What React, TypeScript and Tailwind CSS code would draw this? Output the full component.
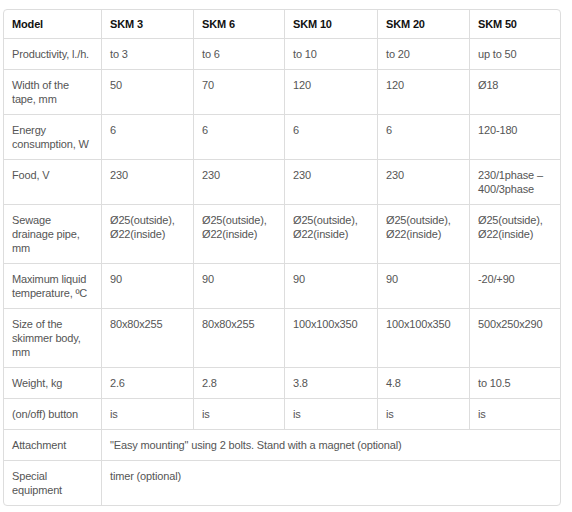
const models = ["SKM 3", "SKM 6", "SKM 10", "SKM 20", "SKM 50"];

const rows: { label: string; values: string[] }[] = [
  { label: "Productivity, l./h.", values: ["to 3", "to 6", "to 10", "to 20", "up to 50"] },
  { label: "Width of the tape, mm", values: ["50", "70", "120", "120", "Ø18"] },
  { label: "Energy consumption, W", values: ["6", "6", "6", "6", "120-180"] },
  { label: "Food, V", values: ["230", "230", "230", "230", "230/1phase – 400/3phase"] },
  {
    label: "Sewage drainage pipe, mm",
    values: Array(5).fill("Ø25(outside), Ø22(inside)"),
  },
  { label: "Maximum liquid temperature, ºC", values: ["90", "90", "90", "90", "-20/+90"] },
  {
    label: "Size of the skimmer body, mm",
    values: ["80x80x255", "80x80x255", "100x100x350", "100x100x350", "500x250x290"],
  },
  { label: "Weight, kg", values: ["2.6", "2.8", "3.8", "4.8", "to 10.5"] },
  { label: "(on/off) button", values: ["is", "is", "is", "is", "is"] },
];

const spanRows = [
  { label: "Attachment", value: "\"Easy mounting\" using 2 bolts. Stand with a magnet (optional)" },
  { label: "Special equipment", value: "timer (optional)" },
];

const cell = "px-[8px] py-[8px] align-top border-t border-[#dddddd]";

export default function App() {
  return (
    <div className="min-h-[512px] bg-white pl-[3px] pt-[9px] font-['Liberation_Sans',Arial,sans-serif] text-[11px] leading-[14px] tracking-[-0.15px]">
      <div className="w-[558px] overflow-hidden rounded-[4px] border border-[#dddddd]">
        <table className="w-[556px] table-fixed border-separate border-spacing-0">
          <colgroup>
            <col className="w-[97px]" />
            <col className="w-[92px]" />
            <col className="w-[91px]" />
            <col className="w-[93px]" />
            <col className="w-[92px]" />
            <col className="w-[91px]" />
          </colgroup>
          <thead>
            <tr>
              <th className="px-[8px] py-[7px] text-left align-top font-bold text-[#111111]">Model</th>
              {models.map((m) => (
                <th
                  key={m}
                  className="border-l border-[#dddddd] px-[8px] py-[7px] text-left align-top font-bold text-[#111111]"
                >
                  {m}
                </th>
              ))}
            </tr>
          </thead>
          <tbody className="text-[#555555]">
            {rows.map((r) => (
              <tr key={r.label}>
                <td className={cell}>{r.label}</td>
                {r.values.map((v, i) => (
                  <td key={i} className={`${cell} border-l`}>
                    {v}
                  </td>
                ))}
              </tr>
            ))}
            {spanRows.map((r) => (
              <tr key={r.label}>
                <td className={cell}>{r.label}</td>
                <td colSpan={5} className={`${cell} border-l`}>
                  {r.value}
                </td>
              </tr>
            ))}
          </tbody>
        </table>
      </div>
    </div>
  );
}
